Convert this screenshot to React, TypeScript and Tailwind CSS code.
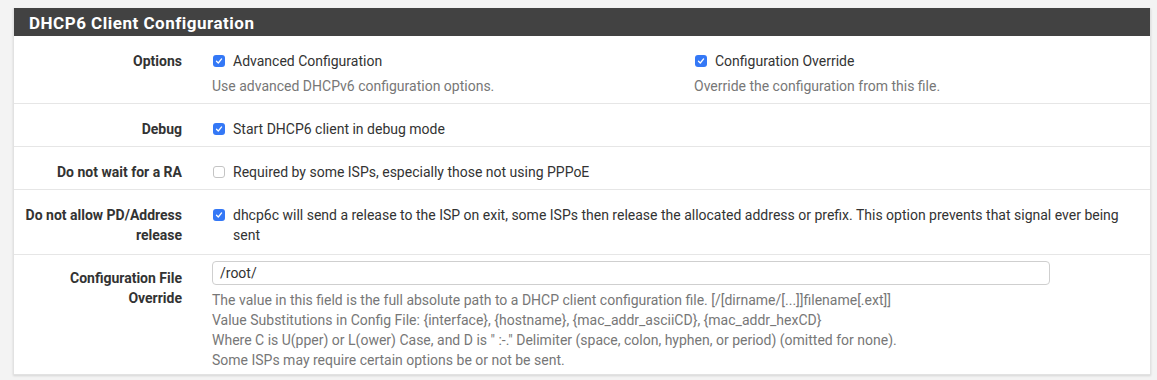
import React from 'react';

const Check: React.FC<{ checked?: boolean }> = ({ checked }) =>
  checked ? (
    <span className="flex items-center justify-center w-[12px] h-[12px] rounded-[3px] bg-[#3478f6] shrink-0">
      <svg width="8" height="8" viewBox="0 0 8 8" fill="none">
        <path d="M1.5 4.2 L3.3 6 L6.6 1.9" stroke="white" strokeWidth="1.3" strokeLinecap="round" strokeLinejoin="round" />
      </svg>
    </span>
  ) : (
    <span className="block w-[12px] h-[12px] rounded-[3px] bg-white border border-[#c4c4c4] shrink-0" />
  );

const Label: React.FC<{ children: React.ReactNode; className?: string }> = ({ children, className }) => (
  <div className={`w-[183px] shrink-0 pr-[15px] text-right font-bold text-[#333] ${className ?? ''}`}>{children}</div>
);

const CheckLine: React.FC<{ checked?: boolean; children: React.ReactNode }> = ({ checked, children }) => (
  <div className="flex items-start gap-[8px]">
    <div className="flex items-center h-[20px] pl-[1px] shrink-0">
      <Check checked={checked} />
    </div>
    <span>{children}</span>
  </div>
);

const App: React.FC = () => {
  return (
    <div
      className="min-h-[380px] bg-[#f3f3f3] pt-[8px] px-[13px] pb-[6px] text-[14px] leading-[20px] text-[#333]"
      style={{ fontFamily: 'Roboto, "Liberation Sans", sans-serif' }}
    >
      <div className="bg-white w-[1138px] shadow-[0_1px_2px_rgba(0,0,0,0.12)] border-x border-b border-[#e2e2e2]">
        <div className="bg-[#424242] h-[28px] flex items-center px-[15px]">
          <h2 className="text-white font-bold text-[17px] tracking-[0.5px] pt-[1px]">DHCP6 Client Configuration</h2>
        </div>

        {/* Options */}
        <div className="flex border-b border-[#e6e6e6] pt-[15px] pb-[7px]">
          <Label>Options</Label>
          <div className="pl-[15px] flex">
            <div className="w-[482px]">
              <CheckLine checked>Advanced Configuration</CheckLine>
              <p className="mt-[5px] text-[#777]">Use advanced DHCPv6 configuration options.</p>
            </div>
            <div>
              <CheckLine checked>Configuration Override</CheckLine>
              <p className="mt-[5px] text-[#777]">Override the configuration from this file.</p>
            </div>
          </div>
        </div>

        {/* Debug */}
        <div className="flex border-b border-[#e6e6e6] pt-[15px] pb-[7px]">
          <Label>Debug</Label>
          <div className="pl-[15px]">
            <CheckLine checked>Start DHCP6 client in debug mode</CheckLine>
          </div>
        </div>

        {/* Do not wait */}
        <div className="flex border-b border-[#e6e6e6] pt-[15px] pb-[7px]">
          <Label>Do not wait for a RA</Label>
          <div className="pl-[15px]">
            <CheckLine>Required by some ISPs, especially those not using PPPoE</CheckLine>
          </div>
        </div>

        {/* Do not allow release */}
        <div className="flex border-b border-[#e6e6e6] pt-[15px] pb-[9px]">
          <Label>
            Do not allow PD/Address
            <br />
            release
          </Label>
          <div className="pl-[15px] pr-[15px] flex-1">
            <CheckLine checked>
              dhcp6c will send a release to the ISP on exit, some ISPs then release the allocated address or prefix. This option prevents that signal ever being sent
            </CheckLine>
          </div>
        </div>

        {/* Config file override */}
        <div className="flex pt-[6px] pb-[4px]">
          <Label className="pt-[7px]">
            Configuration File
            <br />
            Override
          </Label>
          <div className="pl-[15px] flex-1">
            <div className="w-[838px] h-[24px] border border-[#cfcfcf] rounded-[4px] flex items-center px-[7px] text-[#333]">
              /root/
            </div>
            <div className="mt-[5px] text-[#777]">
              <p>The value in this field is the full absolute path to a DHCP client configuration file. [/[dirname/[...]]filename[.ext]]</p>
              <p>Value Substitutions in Config File: {'{interface}'}, {'{hostname}'}, {'{mac_addr_asciiCD}'}, {'{mac_addr_hexCD}'}</p>
              <p>Where C is U(pper) or L(ower) Case, and D is " :-." Delimiter (space, colon, hyphen, or period) (omitted for none).</p>
              <p>Some ISPs may require certain options be or not be sent.</p>
            </div>
          </div>
        </div>
      </div>
    </div>
  );
};

export default App;
